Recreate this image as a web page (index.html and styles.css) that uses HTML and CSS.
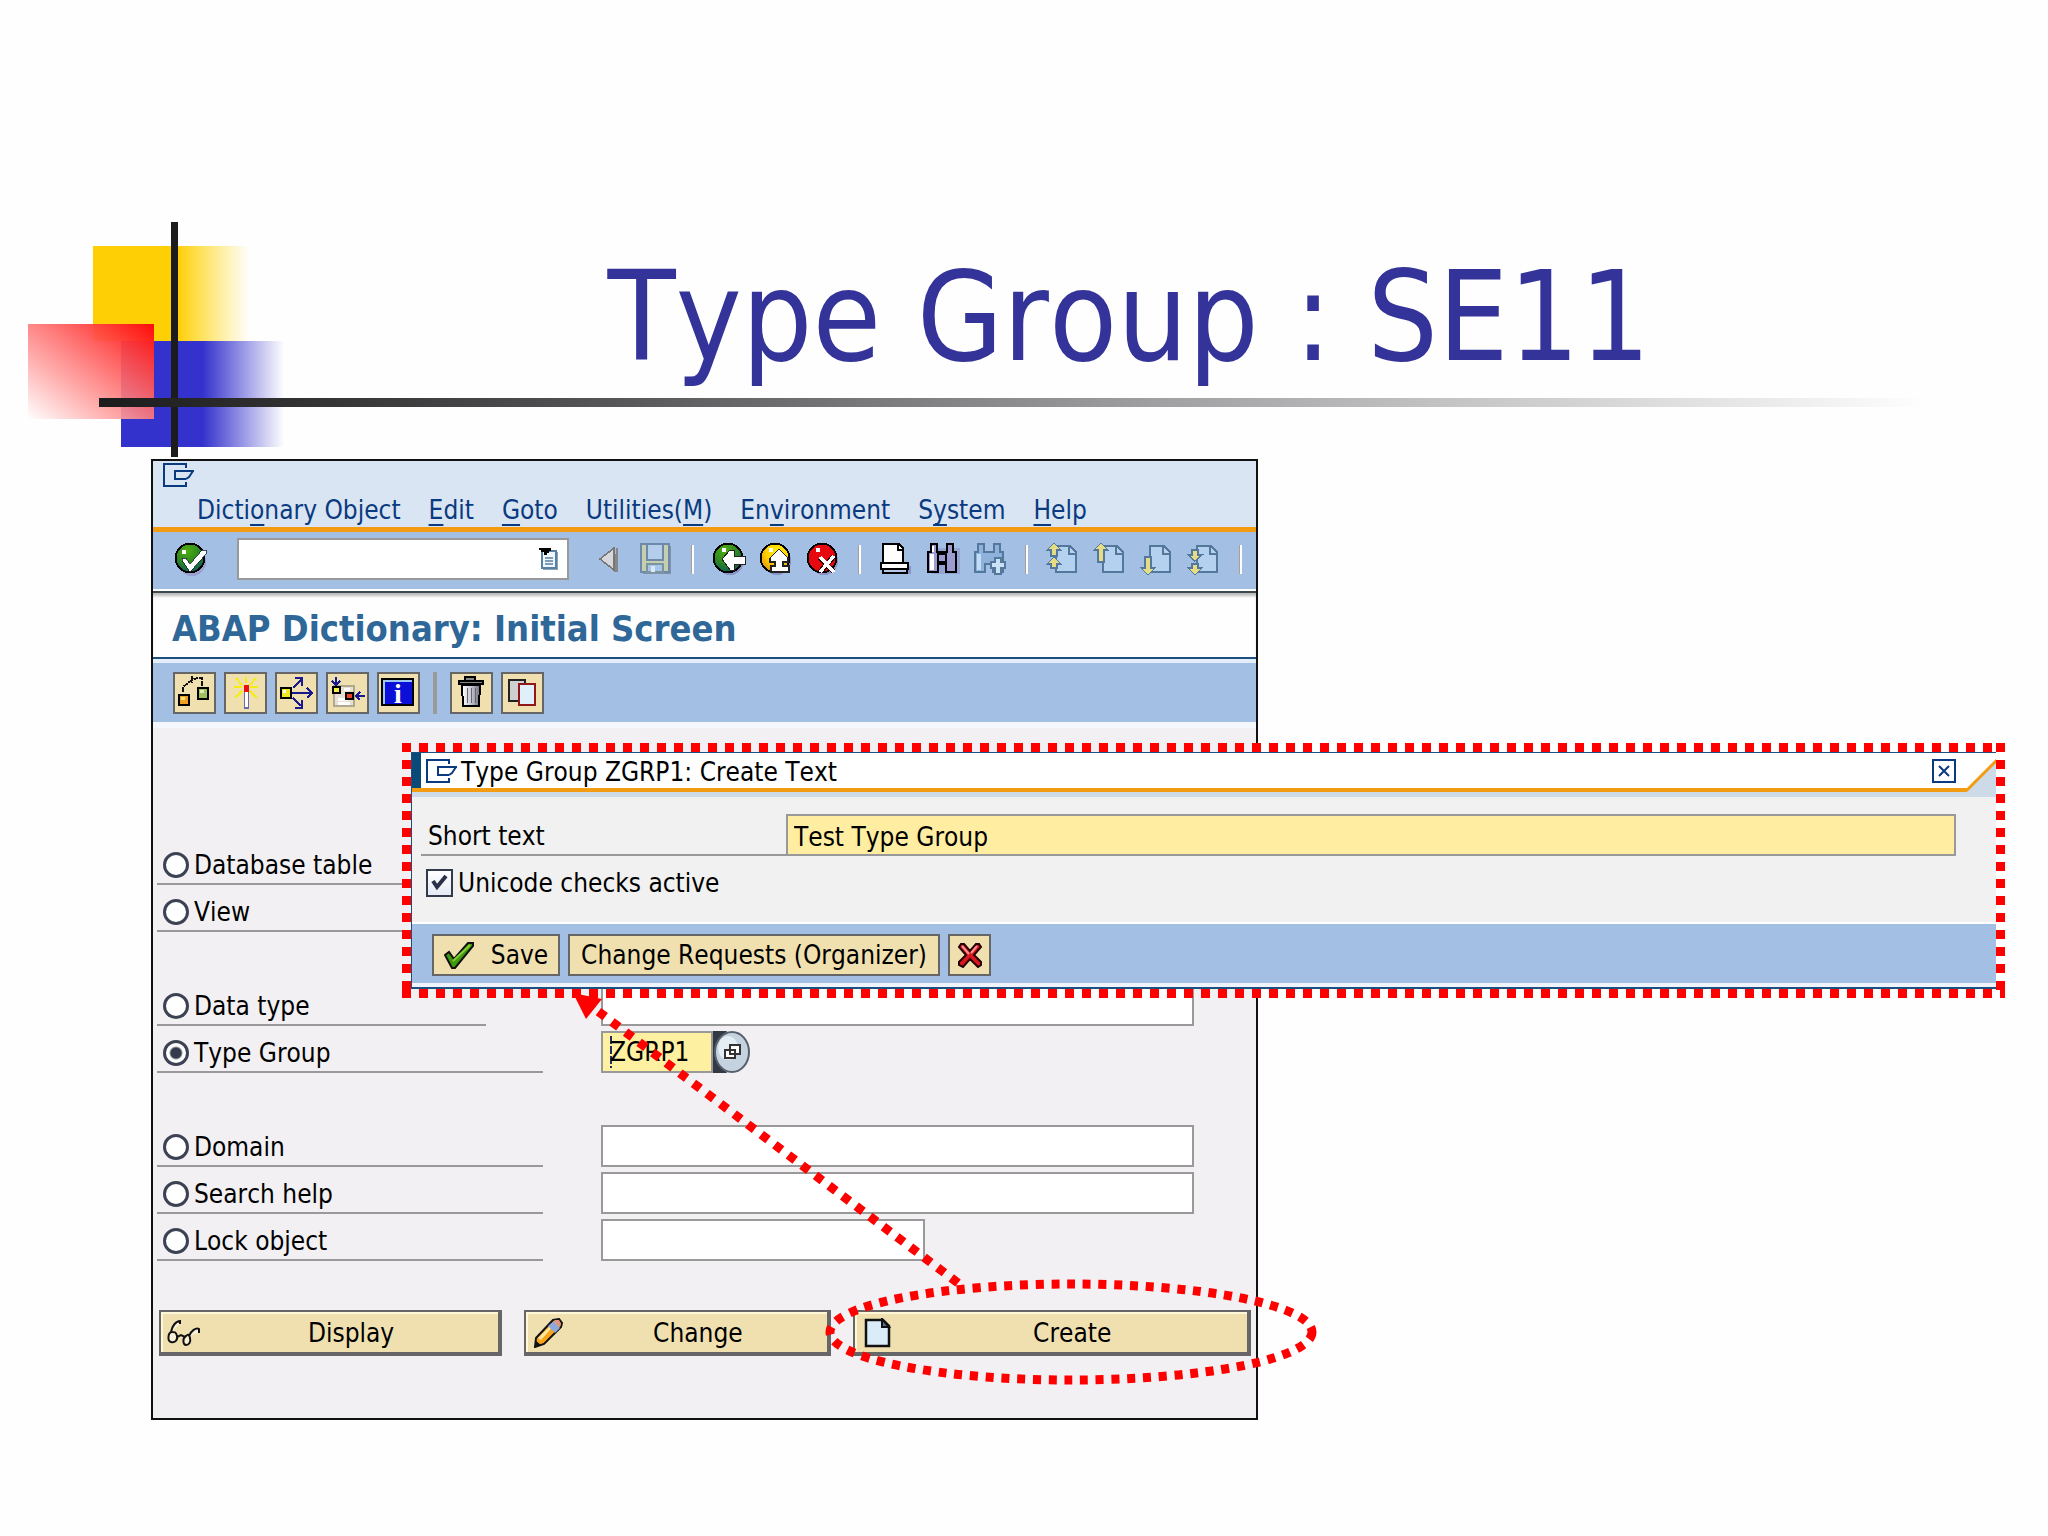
FILE: index.html
```
<!DOCTYPE html>
<html lang="en">
<head>
  <meta charset="UTF-8" />
  <meta name="viewport" content="width=device-width, initial-scale=1.0"/>
  <title>Type Group : SE11</title>
  <link rel="stylesheet" href="styles.css">
</head>
<body>

<!-- shared gradients -->
<svg class="defs" width="0" height="0" aria-hidden="true">
  <defs>
    <linearGradient id="fadeYellow"><stop offset="0.54" stop-color="#ffcf05"/><stop offset="1" stop-color="#ffdc20" stop-opacity="0"/></linearGradient>
    <linearGradient id="fadeBlue"><stop offset="0.5" stop-color="#3432cc"/><stop offset="1" stop-color="#3432cc" stop-opacity="0"/></linearGradient>
    <linearGradient id="fadeRed" x1="1" y1="0" x2="0" y2="1"><stop offset="0" stop-color="#ff0a08"/><stop offset="0.5" stop-color="#ff7c7c" stop-opacity="0.9"/><stop offset="1" stop-color="#fff" stop-opacity="0.95"/></linearGradient>
    <radialGradient id="ballGreen" cx="0.4" cy="0.25" r="0.8"><stop offset="0" stop-color="#4fae10"/><stop offset="0.5" stop-color="#2f8a20"/><stop offset="1" stop-color="#0a5a58"/></radialGradient>
    <radialGradient id="ballYellow" cx="0.6" cy="0.3" r="0.8"><stop offset="0" stop-color="#fff000"/><stop offset="0.5" stop-color="#ffd000"/><stop offset="1" stop-color="#d88a10"/></radialGradient>
    <linearGradient id="metal"><stop offset="0" stop-color="#fff"/><stop offset="0.5" stop-color="#c8c8d8"/><stop offset="1" stop-color="#70707c"/></linearGradient>
  </defs>
</svg>

<div class="slide">
  <svg class="deco" width="300" height="260" viewBox="0 0 300 260" aria-hidden="true">
    <rect x="93" y="24" width="157" height="95" fill="url(#fadeYellow)"/>
    <rect x="121" y="119" width="163" height="106" fill="url(#fadeBlue)"/>
    <rect x="28" y="102" width="126" height="95" fill="url(#fadeRed)"/>
    <rect x="171" y="0" width="7" height="235" fill="#1c1c1c"/>
  </svg>
  <div class="rule"></div>
  <h1>Type Group : SE11</h1>

  <main class="window">
    <div class="titlebar">
      <svg class="sys" width="32" height="24" viewBox="0 0 32 24"><path d="M23 5V1H1v22h22v-4M31 8H12v8h11M23 16l3-2 2-3 2-3"/></svg>
    </div>
    <nav class="menu">
      <button>Dicti<u>o</u>nary Object</button>
      <button><u>E</u>dit</button>
      <button><u>G</u>oto</button>
      <button>Utilities(<u>M</u>)</button>
      <button>En<u>v</u>ironment</button>
      <button>S<u>y</u>stem</button>
      <button><u>H</u>elp</button>
    </nav>

    <div class="toolbar">
      <button class="tool" aria-label="Enter">
        <svg viewBox="0 0 17 17"><circle cx="9" cy="10" r="7" fill="#9a9fd0"/><circle cx="8" cy="8" r="7.2" fill="url(#ballGreen)" stroke="#000"/><rect x="4" y="4" width="2" height="2" fill="#fff"/><path d="M4 8h2l2 3 6-7h2v2l-8 9-4-6z" fill="#fff" stroke="#123" stroke-width=".4"/></svg>
      </button>
      <div class="command">
        <input type="text" aria-label="Command">
        <button aria-label="History">
          <svg width="20" height="24" viewBox="0 0 20 24"><path d="M4 5h15v18H4z" fill="#8fa3b8"/><path d="M3 4h14v17H3z" fill="#eef6ff" stroke="#5b7f9f" stroke-width="2"/><path d="M6 11h8M6 14h8M6 17h8" stroke="#5b7f9f" stroke-width="1.5"/><path d="M0 1h12v3h-2v2H8v2H5V5H2V3H0z" fill="#000"/></svg>
        </button>
      </div>
      <button class="tool" aria-label="Previous">
        <svg viewBox="0 0 17 17"><path d="M12 3h1v12h-2z" fill="#888"/><path d="M11 3v11L4 8.500z" fill="#d8d8dc" stroke="#777" stroke-width=".8"/></svg>
      </button>
      <button class="tool" aria-label="Save">
        <svg viewBox="0 0 17 17"><path d="M2 2h14v14H2z" fill="#7f93a8"/><path d="M1 1h14v14H1z" fill="#c3cfae" stroke="#6f8aa8"/><path d="M4 1h8v8H4z" fill="#b4cdea" stroke="#6f8aa8"/><path d="M4 11h8v4H4z" fill="#a8c6e8" stroke="#7c93a0"/><path d="M6 12h2v3H6z" fill="#d8e8f8"/></svg>
      </button>
      <span class="sep"></span>
      <button class="tool" aria-label="Back">
        <svg viewBox="0 0 17 17"><circle cx="9" cy="9.500" r="7" fill="#8a92c8"/><circle cx="8" cy="8" r="7.200" fill="url(#ballGreen)" stroke="#000"/><rect x="5" y="3" width="2" height="2" fill="#fff"/><path d="M5 8.500l4-4.500h2v3h5.500v4H11v3H9z" fill="#fff" stroke="#222" stroke-width=".5"/></svg>
      </button>
      <button class="tool" aria-label="Exit">
        <svg viewBox="0 0 17 17"><circle cx="9" cy="9.500" r="7" fill="#8a92c8"/><circle cx="8" cy="8" r="7.200" fill="url(#ballYellow)" stroke="#000"/><rect x="5" y="3" width="2" height="2" fill="#fff"/><path d="M10 3.500l4.500 4.500v2H12v2h3v3H6v-3h2v-2H5.500V8z" fill="#fff" stroke="#222" stroke-width=".6"/></svg>
      </button>
      <button class="tool" aria-label="Cancel">
        <svg viewBox="0 0 17 17"><circle cx="9" cy="9.500" r="7" fill="#8a92c8"/><circle cx="8" cy="8" r="7.200" fill="#e80810" stroke="#000"/><rect x="5" y="3" width="2" height="2" fill="#fff"/><path d="M7 8l7 7M14 7l-7 8" stroke="#300" stroke-width="2.600"/><path d="M7 7.500l7 7.500M14 7l-7 8" stroke="#fff" stroke-width="1.700"/></svg>
      </button>
      <span class="sep"></span>
      <button class="tool" aria-label="Print">
        <svg viewBox="0 0 17 17"><path d="M2 12h14v4H2z" fill="#8a92c8"/><path d="M2 1h8l2 2v8H2z" fill="#fff" stroke="#000"/><path d="M9.500 1v3H12" fill="none" stroke="#000"/><path d="M1 10.500h13.500v3H1z" fill="#fff" stroke="#000"/><path d="M2 13.500h12v2H2z" fill="#b8c8e8" stroke="#000"/></svg>
      </button>
      <button class="tool" aria-label="Find">
        <svg viewBox="0 0 17 17"><path d="M3 3h14v13H3z" fill="#8a92c8" opacity=".6"/><path d="M2.500 1h3v4h5V1h3v4h1.500v10h-5v-4H6v4H1V5h1.500z" fill="#9c9cd0" stroke="#000"/><path d="M6 6h4v4H6z" fill="#9c9cd0" stroke="#000"/><path d="M2 6h2v8H2zM3 2h1v3H3z" fill="#fff"/></svg>
      </button>
      <button class="tool" aria-label="Find next">
        <svg viewBox="0 0 17 17"><path d="M2.500 1h3v4h5V1h3v4h1.500v10h-5v-4H6v4H1V5h1.500z" fill="#8fb2dd" stroke="#54789c"/><path d="M2 6h2v8H2z" fill="#c3dcf4"/><path d="M11 8h3v2h2v3h-2v3h-3v-3H9v-3h2z" fill="#c9e2f6" stroke="#54789c" stroke-width=".6"/></svg>
      </button>
      <span class="sep"></span>
      <button class="tool" aria-label="First page">
        <svg viewBox="0 0 17 17"><path d="M5 2h7l3 3v10H5z" fill="#b4d2f0" stroke="#54789c"/><path d="M11.500 2v4H15" fill="none" stroke="#54789c"/><path d="M4 .5l3.500 3.500H5.500v3h-3V4H.5z M4 7.500L7.500 11H5.500v2h-3v-2H.5z" fill="#e6dc84" stroke="#54789c" stroke-width=".7"/></svg>
      </button>
      <button class="tool" aria-label="Previous page">
        <svg viewBox="0 0 17 17"><path d="M5 2h7l3 3v10H5z" fill="#b4d2f0" stroke="#54789c"/><path d="M11.500 2v4H15" fill="none" stroke="#54789c"/><path d="M4 .5L7.500 4H5.500v6h-3V4H.5z" fill="#e6dc84" stroke="#54789c" stroke-width=".7"/></svg>
      </button>
      <button class="tool" aria-label="Next page">
        <svg viewBox="0 0 17 17"><path d="M5 2h7l3 3v10H5z" fill="#b4d2f0" stroke="#54789c"/><path d="M11.500 2v4H15" fill="none" stroke="#54789c"/><path d="M4 16.500L.5 13h2V7.500h3V13h2z" fill="#e6dc84" stroke="#54789c" stroke-width=".7"/></svg>
      </button>
      <button class="tool" aria-label="Last page">
        <svg viewBox="0 0 17 17"><path d="M5 2h7l3 3v10H5z" fill="#b4d2f0" stroke="#54789c"/><path d="M11.500 2v4H15" fill="none" stroke="#54789c"/><path d="M4 9.500L.5 6.500h2V4h3v2.500h2z M4 16.500L.5 13h2v-2h3v2h2z" fill="#e6dc84" stroke="#54789c" stroke-width=".7"/></svg>
      </button>
      <span class="sep"></span>
    </div>

    <h2>ABAP Dictionary: Initial Screen</h2>

    <div class="apptools">
      <button class="btn icon" aria-label="Check">
        <svg width="39" height="38" viewBox="0 0 39 38"><path d="M8 18v-5l5-4 4-3 5-2h5v8M17 2v7" fill="none" stroke="#111" stroke-width="2" stroke-dasharray="5 1"/><path d="M4 21h10v10H4z" fill="#f0a020" stroke="#000" stroke-width="2.500"/><path d="M6 23h4v3H6z" fill="#ffe080"/><path d="M23 14h10v11H23z" fill="#a0c060" stroke="#000" stroke-width="2.500"/><path d="M25 16h4v3h-4z" fill="#dcecb0"/></svg>
      </button>
      <button class="btn icon" aria-label="Activate">
        <svg width="39" height="38" viewBox="0 0 39 38"><path d="M20 3v6M10 4l6 7M30 4l-6 7M8 13h8M24 13h8M9 24l7-7M31 24l-7-7" stroke="#f4ee10" stroke-width="2"/><path d="M18.500 16h4v18h-4z" fill="#fff" stroke="#6a6ab0" stroke-width="1.500"/><path d="M18 11h5v7h-5z" fill="#e81010"/></svg>
      </button>
      <button class="btn icon" aria-label="Where-used list">
        <svg width="39" height="38" viewBox="0 0 39 38"><path d="M15 19h20M30 14l5 5-5 5M16 14l8-8M18 4h7v8M16 24l8 8M18 34h7v-8" fill="none" stroke="#1a1a90" stroke-width="2"/><path d="M4 14h10v10H4z" fill="#f0e820" stroke="#000" stroke-width="2.500"/><path d="M6 16h3v3H6z" fill="#fff"/></svg>
      </button>
      <button class="btn icon" aria-label="Object list">
        <svg width="39" height="38" viewBox="0 0 39 38"><path d="M6 12h20v20H6z" fill="#e8e0d0" stroke="#b0a890" stroke-width="2"/><path d="M10 25h10M10 29h12M16 15h6" stroke="#fff" stroke-width="3"/><path d="M5 13h7v6H5z" fill="#f0f040" stroke="#000" stroke-width="2"/><path d="M18 19h7v6h-7z" fill="#f04028" stroke="#000" stroke-width="2"/><path d="M8 3v7M4 7l4 4 4-4M37 22H28M32 18l-4 4 4 4" fill="none" stroke="#1a1a90" stroke-width="2"/></svg>
      </button>
      <button class="btn icon" aria-label="Information">
        <svg width="39" height="38" viewBox="0 0 39 38"><path d="M3 5h31v26H3z" fill="#0a10d8" stroke="#000" stroke-width="2"/><path d="M5 30V7h28" fill="none" stroke="#9cc8f0" stroke-width="2"/><text x="19" y="29" text-anchor="middle" class="info">i</text></svg>
      </button>
      <span class="divider"></span>
      <button class="btn icon" aria-label="Delete">
        <svg width="39" height="38" viewBox="0 0 39 38"><path d="M14 3h9v3h8v4H7V6h7z" fill="#555"/><path d="M13 6V3h10v3M7 10V7h24v3z" fill="#888" stroke="#000" stroke-width="2"/><path d="M10 11h18l-1 21H11z" fill="url(#metal)" stroke="#000" stroke-width="2"/><path d="M15 14v15M19 14v15M23 14v15" stroke="#666" stroke-width="1"/></svg>
      </button>
      <button class="btn icon" aria-label="Copy">
        <svg width="39" height="38" viewBox="0 0 39 38"><path d="M6 6h16v21H6z" fill="#d0d0d0" stroke="#222" stroke-width="2"/><path d="M16 10h16v21H16z" fill="#e0f0fa" stroke="#901818" stroke-width="2.500"/></svg>
      </button>
    </div>

    <form class="objects">
      <div class="row">
        <label class="wide"><input type="radio" name="object">Database table</label>
      </div>
      <div class="row">
        <label class="wide"><input type="radio" name="object">View</label>
      </div>
      <div class="row gap">
        <label class="short"><input type="radio" name="object">Data type</label>
        <input type="text" aria-label="Data type name">
      </div>
      <div class="row">
        <label><input type="radio" name="object" checked>Type Group</label>
        <div class="lookup">
          <input type="text" class="active" value="ZGRP1" aria-label="Type group name">
          <button type="button" aria-label="Search values">
            <svg width="38" height="42" viewBox="0 0 38 42"><path d="M0 0h14L2 21l12 21H0z" fill="#333a44"/><ellipse cx="19" cy="21" rx="17" ry="20" fill="#c4d3df" stroke="#56606c" stroke-width="2"/><ellipse cx="15" cy="17" rx="10" ry="12" fill="#e2edf4"/><path d="M17 14h10v9H17zM12 19h10v8H12z" fill="#fff" stroke="#333" stroke-width="2"/></svg>
          </button>
        </div>
      </div>
      <div class="row gap">
        <label><input type="radio" name="object">Domain</label>
        <input type="text" aria-label="Domain name">
      </div>
      <div class="row">
        <label><input type="radio" name="object">Search help</label>
        <input type="text" aria-label="Search help name">
      </div>
      <div class="row">
        <label><input type="radio" name="object">Lock object</label>
        <input type="text" class="half" aria-label="Lock object name">
      </div>

      <div class="actions">
        <button type="button" class="display">
          <svg width="38" height="30" viewBox="0 0 38 30"><path d="M5 14c1-6 5-11 9-11v3M6 14c-4 0-5 9-1 10s7-2 6-6-2-4-5-4zM11 19l4-2 4 2M20 18c-4 2-3 9 0 9s5-3 4-7-2-4-4-2zM23 18c2-5 7-9 10-7v4" fill="#fff" fill-opacity=".5" stroke="#111" stroke-width="2"/></svg>
          <span>Display</span>
        </button>
        <button type="button" class="change">
          <svg width="38" height="30" viewBox="0 0 38 30"><path d="M4 29l1-9L22 2l6-1 3 4-1 4-17 17z" fill="#f8a418" stroke="#111" stroke-width="2"/><path d="M7 20L23 4l2 1-15 17z" fill="#ffe6a0"/><path d="M17 8l7 7 5-5-6-7z" fill="#8fa8dc"/><path d="M23 2l5 0 2 4-1 3z" fill="#e09088"/><path d="M4 29v-7l6 5z" fill="#111"/></svg>
          <span>Change</span>
        </button>
        <button type="button" class="create">
          <svg width="38" height="30" viewBox="0 0 38 30"><path d="M6 2h17l6 6v20H6z" fill="#d9ecf8" stroke="#111" stroke-width="2.500"/><path d="M22 1v8h7z" fill="#5a7098" stroke="#111" stroke-width="2"/></svg>
          <span>Create</span>
        </button>
      </div>
    </form>
  </main>

  <section class="highlight">
    <form class="dialog">
      <div class="caption">
        <svg class="sys" width="32" height="24" viewBox="0 0 32 24"><path d="M23 5V1H1v22h22v-4M31 8H12v8h11M23 16l3-2 2-3 2-3"/></svg>
        <span>Type Group ZGRP1: Create Text</span>
        <button type="button" class="close" aria-label="Close">
          <svg width="20" height="20" viewBox="0 0 20 20"><path d="M5 5l10 10M15 5L5 15" stroke="#0a3a80" stroke-width="2"/></svg>
        </button>
        <svg class="corner" width="30" height="39" viewBox="0 0 30 39"><path d="M30 6v33H0z" fill="#cddbe9"/><path d="M-2 37h3L31 7" fill="none" stroke="#f39c12" stroke-width="3"/></svg>
      </div>
      <div class="fields">
        <div class="short-text">
          <label for="shortText">Short text</label>
          <input id="shortText" type="text" value="Test Type Group">
        </div>
        <div class="check">
          <input id="unicode" type="checkbox" checked>
          <svg class="tick" width="17" height="17" viewBox="0 0 17 17"><path d="M2 7l4 6L15 2" fill="none" stroke="#2a3048" stroke-width="4"/></svg>
          <label for="unicode">Unicode checks active</label>
        </div>
      </div>
      <div class="footer">
        <button type="button" class="btn save">
          <svg width="30" height="28" viewBox="0 0 30 28"><path d="M1 14l4-3 5 7L24 2h5v3L11 27H8z" fill="#3f9a10" stroke="#111" stroke-width="2"/><path d="M9 20L26 4" stroke="#86d030" stroke-width="2"/></svg>
          Save
        </button>
        <button type="button" class="btn requests">Change Requests (Organizer)</button>
        <button type="button" class="btn icon" aria-label="Cancel">
          <svg width="26" height="26" viewBox="0 0 26 26"><path d="M4 2h3l6 7 6-7h3l2 3-7 8 7 7v3l-3 2-8-8-7 8-4-2v-3l7-7-7-8z" fill="#dc1420" stroke="#200" stroke-width="2"/><path d="M5 4l7 8M20 4l-6 7" stroke="#ff9090" stroke-width="2"/></svg>
        </button>
      </div>
    </form>
  </section>

  <!-- arrow from the Create button to the dialog -->
  <svg class="callout" width="770" height="410" viewBox="0 0 770 410" aria-hidden="true">
    <ellipse cx="511" cy="352" rx="241" ry="48" stroke-dasharray="8 7.730"/>
    <path d="M398 303L35 29" stroke-dasharray="8.500 8.500"/>
    <path class="tip" d="M13 13l29 6-16 20z"/>
  </svg>
</div>

</body>
</html>
```
FILE: styles.css
```
* { box-sizing: border-box; }
body { margin: 0; background: #fefefe; color: #000; font-family: "DejaVu Sans Condensed", "DejaVu Sans", Tahoma, sans-serif; font-size: 26px; line-height: 30px; font-kerning: none; }
button, input { font: inherit; color: inherit; font-kerning: none; }
button { padding: 0; border: none; background: none; cursor: pointer; }
svg { display: block; flex: none; }
.defs { position: absolute; }

.slide { position: relative; padding-bottom: 115px; }
.deco { position: absolute; left: 0; top: 222px; }
.rule { position: absolute; left: 99px; right: 120px; top: 398px; height: 9px; background: linear-gradient(90deg, #1c1c1c, #4c4c4e 24%, #a0a0a2 58%, rgba(255,255,255,0)); }
h1 { margin: 0; padding: 242px 0 67px 210px; text-align: center; font-size: 124px; line-height: 150px; font-weight: normal; color: #333399; }

/* main window */
.window { width: calc(54% + 1px); margin-left: 151px; border: 2px solid #111; background: #f2f0f2; }
.titlebar { height: 34px; padding: 2px 10px; background: #d9e5f2; }
.sys path { fill: none; stroke: #0a3a80; stroke-width: 2; }
.menu { display: flex; gap: 28px; padding: 0 44px 2px; background: #d9e5f2; border-bottom: 5px solid #f39c12; }
.menu button { color: #0a3a80; white-space: nowrap; }
.menu u { text-underline-offset: 5px; text-decoration-thickness: 2px; text-decoration-skip-ink: none; }

.toolbar { display: flex; align-items: center; gap: 13px; height: 59px; padding: 0 0 3px 21px; background: #a3c0e4; border-bottom: 2px solid #fff; }
.tool { flex: none; width: 34px; height: 34px; }
.tool svg { width: 34px; height: 34px; shape-rendering: crispEdges; }
.command { display: flex; align-items: center; width: 332px; height: 42px; margin: 0 10px 0 16px; padding-right: 8px; background: #fff; border: 2px solid #999; }
.command input { flex: 1; min-width: 0; border: none; outline: none; background: none; }
.sep { width: 3px; height: 29px; margin: 0 5px; background: linear-gradient(90deg, #a8a098 1px, #fff 1px); }

h2 { margin: 0; padding: 16px 19px 8px; font-size: 36px; line-height: 40px; color: #2f6898; background: #fefefe; border-top: 2px solid #3c4a50; border-bottom: 2px solid #1c5080; box-shadow: inset 0 4px 3px -1px #bbb; }

.apptools { display: flex; align-items: center; gap: 8px; height: 69px; padding: 0 20px; background: #a3c0e4; border-top: 4px solid #e4eef8; border-bottom: 6px solid #f4f8fc; }
.btn { display: flex; align-items: center; justify-content: center; height: 42px; background: #f0e0b0; border: 2px solid #666; }
.btn.icon { width: 43px; }
.apptools svg { shape-rendering: crispEdges; }
.divider { width: 4px; height: 42px; margin: 0 5px; background: #9a9a9a; }
.info { font: bold 28px "Liberation Serif", serif; fill: #fff; }

.objects { padding: 115px 5px 62px 4px; }
.row { display: flex; gap: 58px; height: 42px; margin: 0 57px 5px 0; }
.row.gap { margin-top: 52px; }
.row label { display: flex; align-items: center; gap: 5px; width: 386px; padding: 3px 0 0 6px; border-bottom: 2px solid #999; }
.row .short { width: 329px; margin-right: 57px; }
.row .wide { width: 445px; }
input[type="text"] { border-radius: 0; }
.row > input { flex: 1; min-width: 0; padding: 0 8px; background: #fff; border: 2px solid #999; }
.row > .half { flex: none; width: 324px; }
input[type="radio"] { appearance: none; width: 26px; height: 26px; margin: 0; background: #fff; border: 3px solid #3c4254; border-radius: 50%; }
input[type="radio"]:checked { background: radial-gradient(circle, #333a4a 5px, #fff 7px); }
.lookup { display: flex; }
.lookup input { width: 112px; padding: 0 7px; border: 2px solid #999; background: #fdf0a0 repeating-linear-gradient(#222a60 0 8px, transparent 8px 10px) no-repeat 7px 3px / 2px 32px; }

.actions { display: flex; gap: 22px; margin-top: 49px; padding-left: 2px; }
.actions button { display: flex; align-items: center; height: 46px; padding: 2px 0 0 5px; background: #f0e0b0; border: 2px solid #666; border-width: 2px 4px 4px 2px; box-shadow: inset 2px 2px #fff8d8; }
.actions span { flex: 1; text-align: center; }
.actions .display { flex: 343; }
.actions .change { flex: 305; }
.actions .create { flex: 400; }

/* dialog with the dashed frame round it */
.highlight {
  position: absolute; left: 402px; right: 43px; top: 743px; padding: 9px;
  background:
    repeating-linear-gradient(90deg, #f00 0 9px, transparent 9px 17px) top / 100% 9px no-repeat,
    repeating-linear-gradient(90deg, #f00 0 9px, transparent 9px 17px) bottom / 100% 9px no-repeat,
    repeating-linear-gradient(#f00 0 9px, transparent 9px 17px) left / 9px 100% no-repeat,
    repeating-linear-gradient(#f00 0 9px, transparent 9px 17px) right / 9px 100% no-repeat;
}
.dialog { background: #f1f1f1; border: 2px solid #1c5080; border-width: 1px 0 2px 1px; }
.caption { position: relative; display: flex; align-items: center; gap: 3px; height: 44px; padding: 0 40px 3px 14px; background: linear-gradient(90deg, #0a4a78 9px, #fff 9px); border-bottom: 5px solid #cddbe9; box-shadow: inset 0 -4px #f39c12; }
.caption span { padding-top: 2px; }
.close { margin-left: auto; width: 24px; height: 24px; border: 2px solid #0a3a80; }
.corner { position: absolute; right: 0; top: 0; }
.fields { padding: 17px 40px 0 9px; height: 125px; }
.short-text { display: flex; height: 42px; }
.short-text label { display: flex; align-items: center; width: 365px; padding: 3px 7px 0; border-bottom: 2px solid #999; }
.short-text input { flex: 1; min-width: 0; padding: 4px 6px 0; background: #ffeea2; border: 2px solid #999; }
.check { position: relative; display: flex; align-items: center; gap: 5px; width: max-content; margin-top: 12px; padding-left: 5px; }
.check input { appearance: none; width: 27px; height: 28px; margin: 0; border: 2px solid #333a4a; background: linear-gradient(#fff, #e4eaf4); }
.tick { position: absolute; left: 10px; top: 6px; visibility: hidden; pointer-events: none; }
.check input:checked + .tick { visibility: visible; }
.footer { display: flex; gap: 8px; height: 65px; padding: 10px 20px; background: #a3c0e4; border-top: 2px solid #fff; border-bottom: 4px solid #eef4fa; }
.footer .save { width: 128px; gap: 17px; }
.footer .requests { width: 372px; }

.callout { position: absolute; left: 560px; top: 980px; pointer-events: none; fill: none; stroke: #f00; stroke-width: 9px; }
.callout .tip { fill: #f00; stroke: none; }
```
